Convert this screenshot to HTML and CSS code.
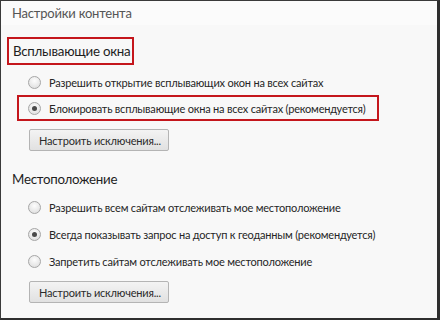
FILE: index.html
```html
<!DOCTYPE html>
<html>
<head>
<meta charset="utf-8">
<link rel="stylesheet" href="styles.css">
</head>
<body>
<div class="frame">
  <div class="title">Настройки контента</div>
  <div class="section">
    <div class="heading boxed">Всплывающие окна</div>
    <div class="options first">
      <label class="opt"><span class="radio"></span><span>Разрешить открытие всплывающих окон на всех сайтах</span></label>
      <label class="opt boxed-row"><span class="radio checked"></span><span>Блокировать всплывающие окна на всех сайтах (рекомендуется)</span></label>
    </div>
    <button class="btn">Настроить исключения...</button>
  </div>
  <div class="section second">
    <div class="heading">Местоположение</div>
    <div class="options loose">
      <label class="opt"><span class="radio"></span><span>Разрешить всем сайтам отслеживать мое местоположение</span></label>
      <label class="opt"><span class="radio checked"></span><span>Всегда показывать запрос на доступ к геоданным (рекомендуется)</span></label>
      <label class="opt"><span class="radio"></span><span>Запретить сайтам отслеживать мое местоположение</span></label>
    </div>
    <button class="btn btn-loose">Настроить исключения...</button>
  </div>
</div>
</body>
</html>
```
FILE: styles.css
```css
html, body { margin: 0; padding: 0; background: #fff; }
.frame {
  width: 440px; height: 320px; box-sizing: border-box;
  border-left: 1px solid #3a3a3a; border-top: 1px solid #3a3a3a;
  border-right: 3px solid #2e2e2e; border-bottom: 2px solid #2e2e2e;
  background: #f8f8f8;
  font-family: "Lato", "Noto Sans", sans-serif;
  color: #2a2a2a;
  display: flex; flex-direction: column;
  white-space: nowrap;
}
.title { font-size: 13px; letter-spacing: -0.2px; color: #555; padding-left: 11px; height: 24px; line-height: 24px; background: #fbfbfb; }
.section { display: flex; flex-direction: column; align-items: flex-start; }
.heading { font-size: 13.3px; letter-spacing: -0.25px; color: #1e1e1e; margin-left: 11px; line-height: 20px; }
.heading.boxed { margin: 12px 0 0 6px; border: 2px solid #c4161c; padding: 2px 2px 2px 4px; }
.options { display: flex; flex-direction: column; }
.options.first { margin-top: 4px; }
.opt { display: flex; align-items: center; gap: 8px; font-size: 11px; letter-spacing: -0.2px; color: #262626; height: 26px; padding-left: 27px; }
.boxed-row { margin-left: 16px; padding-left: 9px; padding-right: 12px; border: 2px solid #c4161c; height: 22px; }
.radio { width: 13px; height: 13px; border-radius: 50%; border: 1px solid #a6a6a6; background: radial-gradient(circle at 50% 35%, #fdfdfd, #dadada); position: relative; box-sizing: border-box; flex: none; }
.radio.checked::after { content: ""; position: absolute; left: 3px; top: 3px; width: 5px; height: 5px; border-radius: 50%; background: #4a4a4a; }
.btn { margin: 8px 0 0 28px; width: 140px; height: 22px; font-family: inherit; font-size: 11px; letter-spacing: -0.2px; color: #2a2a2a; text-align: left; padding: 0 9px; border: 1px solid #b4b4b4; border-radius: 2px; background: linear-gradient(#f3f3f3, #e1e1e1); }
.second { margin-top: 18px; }
.options.loose { margin-top: 5px; }
.loose .opt { height: 27px; }
.btn-loose { margin-top: 6px; }
```
